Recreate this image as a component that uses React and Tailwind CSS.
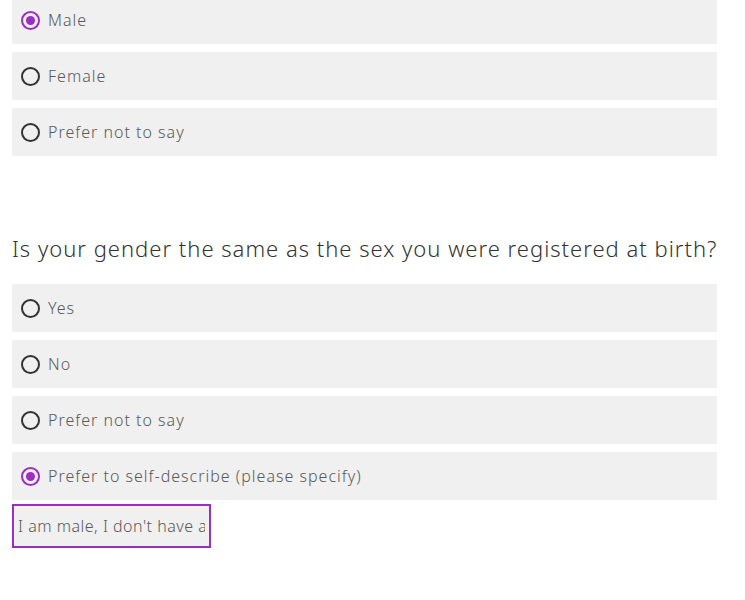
import React, { useState } from 'react'

const font = { fontFamily: '"Noto Sans", "Open Sans", sans-serif' }

function Radio({ checked }) {
  return (
    <span
      className={`flex h-[19px] w-[19px] shrink-0 items-center justify-center rounded-full border-2 ${
        checked ? 'border-[#9b2fc4]' : 'border-[#333333]'
      }`}
    >
      {checked && <span className="h-[9px] w-[9px] rounded-full bg-[#9b2fc4]" />}
    </span>
  )
}

function Option({ label, checked, onSelect }) {
  return (
    <label
      onClick={onSelect}
      className="flex h-12 cursor-pointer items-center gap-[8px] bg-[#f0f0f0] px-[9px] text-[16px] font-light tracking-[1px] text-[#5a5a5a]"
    >
      <Radio checked={checked} />
      <span>{label}</span>
    </label>
  )
}

export default function App() {
  const [sex, setSex] = useState('Male')
  const [gender, setGender] = useState('Prefer to self-describe (please specify)')
  const [describe, setDescribe] = useState("I am male, I don't have any other gender")

  const sexOptions = ['Male', 'Female', 'Prefer not to say']
  const genderOptions = ['Yes', 'No', 'Prefer not to say', 'Prefer to self-describe (please specify)']

  return (
    <div className="min-h-screen bg-white pl-3 pr-7" style={font}>
      <div className="-mt-1 flex flex-col gap-2">
        {sexOptions.map((o) => (
          <Option key={o} label={o} checked={sex === o} onSelect={() => setSex(o)} />
        ))}
      </div>

      <h2 className="mt-[74px] mb-[18px] whitespace-nowrap text-[22px] font-light leading-[36px] tracking-[1px] text-[#333333]">
        Is your gender the same as the sex you were registered at birth?
      </h2>

      <div className="flex flex-col gap-2">
        {genderOptions.map((o) => (
          <Option key={o} label={o} checked={gender === o} onSelect={() => setGender(o)} />
        ))}
      </div>

      <input
        value={describe}
        onChange={(e) => setDescribe(e.target.value)}
        className="mt-1 h-[44px] w-[199px] border-2 border-[#9b2fc4] bg-[#f0f0f0] px-[4px] text-[16px] font-light tracking-[0.5px] text-[#5a5a5a] outline-none"
        style={font}
      />
    </div>
  )
}
